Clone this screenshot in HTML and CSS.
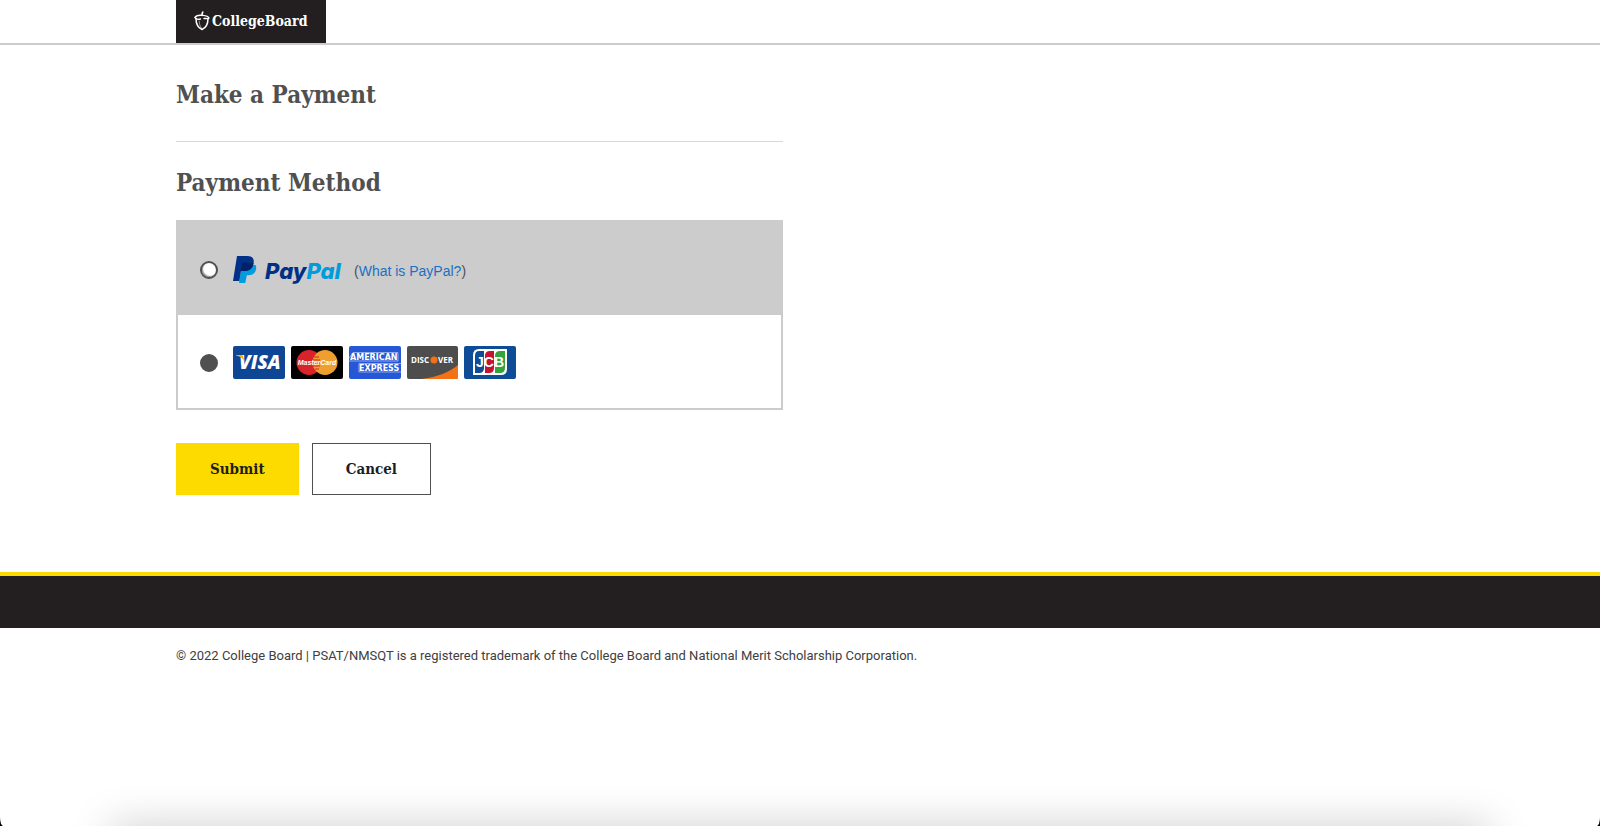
FILE: index.html
```
<!DOCTYPE html>
<html lang="en">
  <head>
    <meta charset="utf-8">
    <title>Make a Payment</title>
    <link rel="stylesheet" href="styles.css">
  </head>
  <body>
    <header class="header">
      <div class="container">
        <a class="logo" href="#">
          <svg width="16" height="20" viewBox="0 0 16 20" fill="none" stroke="#fff" stroke-linecap="round" stroke-linejoin="round">
            <path d="M8 4.500C8 3 8 2 8.800 1" stroke-width="1.600" />
            <path d="M1 6.500C2 4.300 5 4 8 4.300s6 .3 7 2.700c-1 1.200-3 .3-5 .5" stroke-width="1.400" />
            <path d="M1 6.500c1 2 3 2.200 5.500 1.500" stroke-width="1.300" />
            <path d="M2 7.500c0 5.500 2.500 9.500 6 11 3.500-1.500 6-5.500 6-11" stroke-width="1.500" />
            <path d="M5.200 10c0 3 .8 5 2.300 7" stroke-width=".5" />
          </svg>
          <span>CollegeBoard</span>
        </a>
      </div>
    </header>

    <main class="container columns">
      <form class="payment">
        <h1>Make a Payment</h1>
        <hr>
        <h2>Payment Method</h2>

        <div class="methods">
          <div class="method method-paypal">
            <input type="radio" name="method" id="paypal" value="paypal">
            <label for="paypal">
              <svg width="109" height="30" viewBox="0 0 109 30" role="img" aria-label="PayPal">
                <path fill="#009cde" d="M9 10h13.500c1.200 2 .8 4.500-.2 6.500-1.500 2.800-4 3.700-7 3.700h-1.500l-1.500 7.800H6z" />
                <path fill="#003087" d="M4 1h10.500c5 0 7 3 6 7.500-1.200 5.300-4.300 7.500-9 7.500H8l-1.700 10H0z" />
                <path fill="#012169" d="M8.800 9c.2-1 .7-1.300 1.600-1.300h8c1 0 1.700 .2 2.200 .6-1.100 5.500-4.300 7.700-9.100 7.700H7.700z" />
                <text class="paypal-text" x="32" y="24"><tspan fill="#002f86">Pay</tspan><tspan fill="#009cde">Pal</tspan></text>
              </svg>
            </label>
            <span class="hint">(<a href="#">What is PayPal?</a>)</span>
          </div>

          <div class="method">
            <input type="radio" name="method" id="card" value="card" checked>
            <label class="cards" for="card">
              <svg width="52" height="33" viewBox="0 0 52 33" role="img" aria-label="Visa">
                <rect width="52" height="33" rx="2" fill="#0e4595" />
                <text class="visa-text" x="6" y="23">VISA</text>
                <path d="M3 9h5.500c1 0 1.500 .6 1.700 1.500L11 15C9.500 12 6.500 10 3 9.500z" fill="#f2ae14" />
              </svg>
              <svg width="52" height="33" viewBox="0 0 52 33" role="img" aria-label="MasterCard">
                <rect width="52" height="33" rx="2" fill="#000" />
                <circle cx="18" cy="16.500" r="12.500" fill="#d9222a" />
                <circle cx="34" cy="16.500" r="12.500" fill="#ee9f2d" />
                <path d="M23 11h5M22 14h7M22 17h7M22 20h7M24 23h4" stroke="#d9222a" />
                <text class="mastercard-text" x="26" y="19">MasterCard</text>
              </svg>
              <svg width="52" height="33" viewBox="0 0 52 33" role="img" aria-label="American Express">
                <rect width="52" height="33" rx="2" fill="#2557d6" />
                <path d="M0 12 4 6.500H49V15H0M52 17.500H10V26H52" stroke="#fff" stroke-width=".5" fill="none" />
                <text class="amex-text" x="1" y="14">AMERICAN</text>
                <text class="amex-text" x="10" y="25">EXPRESS</text>
              </svg>
              <svg width="51" height="33" viewBox="0 0 51 33" role="img" aria-label="Discover">
                <rect width="51" height="33" rx="2" fill="#4d4d4d" />
                <path d="M51 19v12a2 2 0 0 1-2 2H15C30 31 43 26 51 19z" fill="#f47216" />
                <circle cx="27" cy="14" r="3.500" fill="#f47216" />
                <text class="discover-text" x="4" y="17">DISC</text>
                <text class="discover-text" x="31" y="17">VER</text>
              </svg>
              <svg width="52" height="33" viewBox="0 0 52 33" role="img" aria-label="JCB">
                <rect width="52" height="33" rx="2" fill="#0e4c96" />
                <path d="M15 3h28v20q0 6-6 6H9V9q0-6 6-6z" fill="#fff" />
                <path d="M15 5h5v17q0 5-5 5h-4V10q0-5 4-5z" fill="#0e4c96" />
                <path d="M26 5h4v17q0 5-5 5h-4V10q0-5 5-5z" fill="#c41230" />
                <path d="M36 5h5v17q0 5-5 5h-5V10q0-5 5-5z" fill="#35a33c" />
                <text class="jcb-text" x="26" y="21">JCB</text>
              </svg>
            </label>
          </div>
        </div>

        <div class="buttons">
          <button class="btn btn-primary" type="submit">Submit</button>
          <button class="btn" type="button">Cancel</button>
        </div>
      </form>
    </main>

    <footer>
      <div class="footer-bar"></div>
      <p class="container copyright">© 2022 College Board | PSAT/NMSQT is a registered trademark of the College Board and National Merit Scholarship Corporation.</p>
    </footer>

    <div class="bottom-shadow"></div>
  </body>
</html>
```
FILE: styles.css
```
* {
  box-sizing: border-box;
}

html {
  background-color: #000;
}

body {
  margin: 0;
  min-height: 100vh;
  background-color: #fff;
  border-radius: 0 0 3px 3px / 0 0 9px 9px;
  color: #505050;
  font-family: Roboto, sans-serif;
  font-size: 14px;
}

.container {
  width: 78%;
  margin: 0 auto;
}

.header {
  border-bottom: 2px solid #ccc;
}

.logo {
  display: flex;
  align-items: center;
  gap: 2px;
  width: 150px;
  height: 43px;
  padding: 0 18px 2px;
  background-color: #231f20;
  color: #fff;
  font-family: "Roboto Slab", "DejaVu Serif Condensed", "DejaVu Serif", serif;
  font-size: 14px;
  font-weight: bold;
  text-decoration: none;
}

.columns {
  display: grid;
  grid-template-columns: 1fr 1fr;
  column-gap: 34px;
}

h1,
h2 {
  margin: 0;
  font-family: "Roboto Slab", "DejaVu Serif Condensed", "DejaVu Serif", serif;
  font-size: 24px;
  font-weight: bold;
  line-height: 32px;
}

h1 {
  padding-top: 34px;
}

hr {
  height: 1px;
  margin: 30px 0 25px;
  border: none;
  background-color: #d9d9d9;
}

.methods {
  margin-top: 21px;
  border: 2px solid #ccc;
}

.method {
  display: flex;
  align-items: center;
  height: 93px;
  padding: 2px 22px 0;
}

.method-paypal {
  background-color: #ccc;
}

input[type="radio"] {
  appearance: none;
  width: 18px;
  height: 18px;
  margin: 0 15px 0 0;
  border: 2px solid #505050;
  border-radius: 50%;
  background-color: #fff;
  box-shadow: inset 1px -1px 1px #999;
}

input[type="radio"]:checked {
  background-color: #505050;
  box-shadow: none;
}

label {
  display: flex;
}

.cards {
  gap: 6px;
}

.hint {
  margin-left: 12px;
  padding-top: 3px;
  font-family: "Liberation Sans", Arial, sans-serif;
}

.hint a {
  color: #1a70c4;
  text-decoration: none;
}

.paypal-text {
  font: italic 800 22px Inter, sans-serif;
}

.visa-text {
  fill: #fff;
  font: italic 800 19px "Open Sans", sans-serif;
}

.mastercard-text {
  fill: #fff;
  font: italic bold 7px "Liberation Sans", sans-serif;
  text-anchor: middle;
}

.amex-text {
  fill: #fff;
  font: bold 8px "DejaVu Sans", sans-serif;
}

.discover-text {
  fill: #fff;
  font: bold 8px "Open Sans", sans-serif;
}

.jcb-text {
  fill: #fff;
  font: bold 14px "Liberation Sans", sans-serif;
  text-anchor: middle;
}

.buttons {
  display: flex;
  gap: 13px;
  margin-top: 33px;
}

.btn {
  height: 52px;
  padding: 0 33px;
  border: 1px solid #505050;
  background-color: #fff;
  color: #1e1e1e;
  font-family: "Roboto Slab", "DejaVu Serif Condensed", "DejaVu Serif", serif;
  font-size: 15px;
  font-weight: bold;
  cursor: pointer;
}

.btn-primary {
  border-color: #fedb00;
  background-color: #fedb00;
}

footer {
  margin-top: 77px;
}

.footer-bar {
  height: 56px;
  border-top: 4px solid #fedb00;
  background-color: #231f20;
}

.copyright {
  padding-top: 20px;
  color: #404040;
  font-size: 13px;
  line-height: 16px;
}

/* soft shadow rising from the lower edge of the window */
.bottom-shadow {
  position: fixed;
  top: 100%;
  left: 110px;
  right: 110px;
  height: 40px;
  box-shadow: 0 0 44px rgba(0, 0, 0, 0.2);
}
```
